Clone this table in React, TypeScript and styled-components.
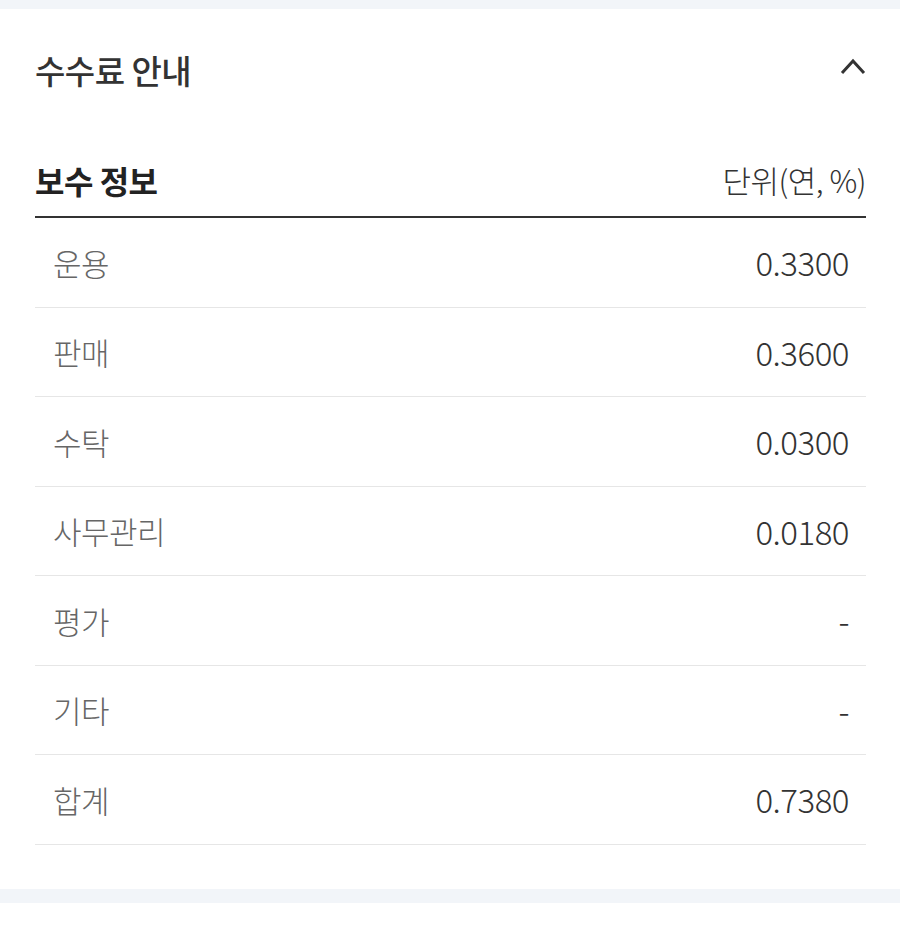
import React, { FC } from 'react';
import styled, { createGlobalStyle } from 'styled-components';

const GlobalStyle = createGlobalStyle`
  body {
    margin: 0;
    background: #fff;
    font-family: "Noto Sans CJK KR", "Noto Sans", sans-serif;
    color: #333;
  }
`;

const Band = styled.div<{ h: number }>`
  height: ${(p) => p.h}px;
  background: #f2f5f9;
`;

const Section = styled.section`
  padding: 0 34px 44px 35px;
`;

const TitleBar = styled.div`
  height: 122px;
  display: flex;
  align-items: center;
  justify-content: space-between;
`;

const Title = styled.h2`
  margin: 0;
  font-size: 33px;
  font-weight: 500;
  color: #333;
  letter-spacing: -0.5px;
`;

const Toggle = styled.button`
  border: 0;
  background: none;
  padding: 0;
  margin-bottom: 8px;
  display: flex;
  cursor: pointer;
`;

const TableHead = styled.div`
  height: 87px;
  box-sizing: border-box;
  display: flex;
  align-items: flex-end;
  justify-content: space-between;
  padding-bottom: 14px;
  border-bottom: 2px solid #333;
  line-height: 44px;
`;

const HeadTitle = styled.h3`
  margin: 0;
  font-size: 32px;
  font-weight: 700;
  color: #222;
  letter-spacing: -0.5px;
`;

const Unit = styled.span`
  font-size: 31px;
  font-weight: 300;
  color: #333;
  letter-spacing: -0.5px;
`;

const Row = styled.div`
  height: 89.5px;
  box-sizing: border-box;
  display: flex;
  align-items: center;
  justify-content: space-between;
  padding: 0 17px 0 18px;
  border-bottom: 1px solid #e6e6e6;
`;

const Label = styled.span`
  font-size: 31px;
  font-weight: 300;
  color: #666;
  letter-spacing: -0.5px;
`;

const Value = styled.span`
  font-size: 33px;
  font-weight: 300;
  color: #333;
  letter-spacing: -0.5px;
`;

const fees: [string, string][] = [
  ['운용', '0.3300'],
  ['판매', '0.3600'],
  ['수탁', '0.0300'],
  ['사무관리', '0.0180'],
  ['평가', '-'],
  ['기타', '-'],
  ['합계', '0.7380'],
];

const App: FC = () => {
  return (
    <>
      <GlobalStyle />
      <Band h={9} />
      <Section>
        <TitleBar>
          <Title>수수료 안내</Title>
          <Toggle aria-label="접기">
            <svg width="26" height="17" viewBox="0 0 26 17">
              <path d="M2 15 L13 3 L24 15" fill="none" stroke="#333" strokeWidth="3" />
            </svg>
          </Toggle>
        </TitleBar>
        <TableHead>
          <HeadTitle>보수 정보</HeadTitle>
          <Unit>단위(연, %)</Unit>
        </TableHead>
        {fees.map(([label, value]) => (
          <Row key={label}>
            <Label>{label}</Label>
            <Value>{value}</Value>
          </Row>
        ))}
      </Section>
      <Band h={14} />
    </>
  );
};

export default App;
